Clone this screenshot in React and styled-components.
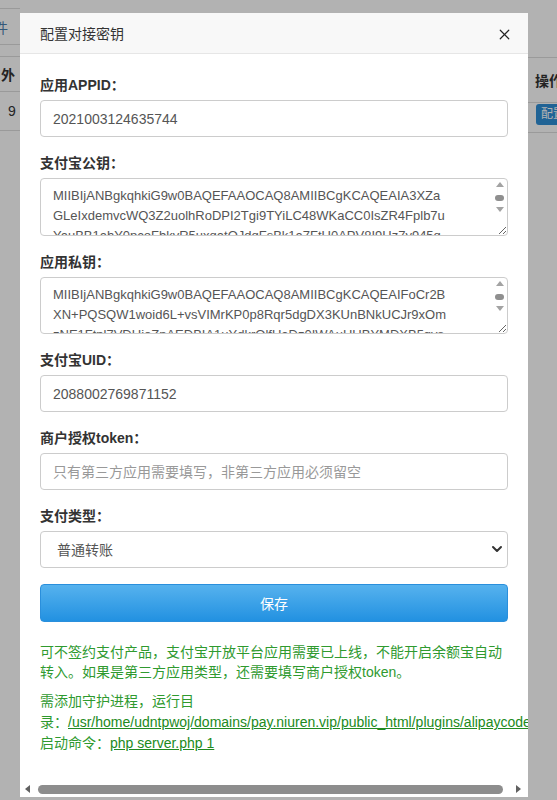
import React from 'react';
import styled, { createGlobalStyle } from 'styled-components';
import { X, ChevronDown } from 'lucide-react';

const GlobalStyle = createGlobalStyle`
  html, body {
    margin: 0;
    padding: 0;
  }
  body {
    font-family: "Liberation Sans", "Noto Sans CJK SC", sans-serif;
    font-size: 14px;
    color: #333;
    background: #fff;
  }
  * {
    box-sizing: border-box;
  }
`;

const Page = styled.div`
  display: flex;
  justify-content: space-between;
  height: 800px;
  overflow: hidden;
`;

const LeftStrip = styled.div`
  width: 20px;
  overflow: hidden;
  display: flex;
  flex-direction: column;
  padding-top: 8px;
`;

const RightStrip = styled.div`
  width: 29px;
  overflow: hidden;
  display: flex;
  flex-direction: column;
  padding-top: 57px;
`;

const TabBox = styled.div`
  height: 37px;
  border-top: 1px solid #ddd;
  border-bottom: 1px solid #ddd;
  display: flex;
  align-items: center;
  color: #4b7fae;
  white-space: nowrap;
  span {
    margin-left: -20px;
  }
`;

const HeadCell = styled.div`
  height: ${({ h }) => h}px;
  margin-top: ${({ mt }) => mt || 0}px;
  border-top: 1px solid #ddd;
  border-bottom: 1px solid #ddd;
  display: flex;
  align-items: center;
  font-weight: bold;
  white-space: nowrap;
  padding-left: ${({ pl }) => pl}px;
`;

const RowCell = styled.div`
  height: ${({ h }) => h}px;
  border-bottom: 1px solid #ddd;
  display: flex;
  align-items: ${({ top }) => (top ? 'flex-start' : 'center')};
  padding-top: ${({ top }) => (top ? 1 : 0)}px;
  white-space: nowrap;
  padding-left: ${({ pl }) => pl}px;
`;

const TinyButton = styled.span`
  display: inline-block;
  background: #2e8ed6;
  color: #fff;
  font-size: 12px;
  line-height: 21px;
  padding: 0 5px;
  border-radius: 3px;
`;

const Overlay = styled.div`
  position: fixed;
  inset: 0;
  background: rgba(0, 0, 0, 0.3);
`;

const Modal = styled.div`
  position: fixed;
  top: 13px;
  left: 20px;
  width: 508px;
  height: 784px;
  background: #fff;
  overflow: hidden;
  display: flex;
  flex-direction: column;
`;

const Header = styled.div`
  flex: none;
  height: 41px;
  background: #f8f8f8;
  border-bottom: 1px solid #e6e6e6;
  display: flex;
  align-items: center;
  justify-content: space-between;
  padding: 0 15px 0 20px;
`;

const Title = styled.span`
  font-size: 14px;
  color: #333;
`;

const Close = styled.button`
  border: 0;
  background: none;
  padding: 0;
  display: flex;
  color: #222;
  margin-top: 3px;
`;

const Body = styled.div`
  flex: 1;
  min-height: 0;
  overflow: hidden;
  padding: 21px 20px 0;
`;

const HScroll = styled.div`
  flex: none;
  height: 12px;
  margin-bottom: 2px;
  display: flex;
  align-items: center;
  padding: 0 7px 0 5px;
`;

const Arrow = styled.span`
  width: 0;
  height: 0;
  border-top: 4px solid transparent;
  border-bottom: 4px solid transparent;
  ${({ dir, color }) =>
    dir === 'left'
      ? `border-right: 5px solid ${color};`
      : `border-left: 5px solid ${color};`}
`;

const VArrow = styled.span`
  width: 0;
  height: 0;
  border-left: 4px solid transparent;
  border-right: 4px solid transparent;
  ${({ dir, color }) =>
    dir === 'up'
      ? `border-bottom: 5px solid ${color};`
      : `border-top: 5px solid ${color};`}
`;

const Track = styled.div`
  flex: 1;
  height: 100%;
  display: flex;
  align-items: center;
  padding: 0 13px 0 8px;
`;

const Thumb = styled.div`
  width: 100%;
  height: 9px;
  border-radius: 5px;
  background: #8d8d8d;
`;

const Group = styled.div`
  margin-bottom: 16px;
`;

const Label = styled.label`
  display: block;
  font-weight: bold;
  line-height: 20px;
  margin-bottom: 5px;
  color: #333;
`;

const Input = styled.input`
  display: block;
  width: 100%;
  height: 37px;
  padding: 6px 12px;
  border: 1px solid #ccc;
  border-radius: 4px;
  font-family: inherit;
  font-size: 14px;
  color: #555;
  outline: none;
  &::placeholder {
    color: #999;
  }
`;

const AreaWrap = styled.div`
  position: relative;
`;

const TextArea = styled.textarea`
  display: block;
  width: 100%;
  height: 57.5px;
  padding: 7px 26px 0 12px;
  border: 1px solid #ccc;
  border-radius: 4px;
  font-family: inherit;
  font-size: 13px;
  line-height: 20px;
  color: #555;
  outline: none;
  resize: vertical;
  overflow: hidden;
`;

const VScroll = styled.div`
  position: absolute;
  top: 1px;
  right: 1px;
  width: 15px;
  bottom: 15px;
  display: flex;
  flex-direction: column;
  align-items: center;
  padding-top: 3px;
  pointer-events: none;
`;

const Ball = styled.span`
  width: 9px;
  height: 6px;
  border-radius: 3px;
  background: #8f8f8f;
  margin: 8px 0 6px;
`;

const SelectWrap = styled.div`
  position: relative;
  svg {
    position: absolute;
    right: 3px;
    top: 10px;
    pointer-events: none;
    color: #333;
  }
`;

const Select = styled.select`
  display: block;
  width: 100%;
  height: 37px;
  padding: 0 30px 0 16px;
  border: 1px solid #ccc;
  border-radius: 4px;
  background: #fff;
  font-family: inherit;
  font-size: 14px;
  color: #555;
  appearance: none;
  outline: none;
`;

const SaveButton = styled.button`
  display: block;
  width: 100%;
  height: 38px;
  border: 1px solid #2a8fdc;
  border-radius: 4px;
  background: linear-gradient(to bottom, #56b2ee, #2291e1);
  color: #fff;
  font-family: inherit;
  font-size: 14px;
`;

const Note = styled.p`
  margin: ${({ first }) => (first ? '20px 0 9px' : '0')};
  line-height: ${({ lh }) => lh}px;
  color: #2f9a2f;
  font-size: 14px;
  a {
    color: #218a21;
    text-decoration: underline;
  }
`;

const publicKey = [
  'MIIBIjANBgkqhkiG9w0BAQEFAAOCAQ8AMIIBCgKCAQEAIA3XZa',
  'GLeIxdemvcWQ3Z2uolhRoDPI2Tgi9TYiLC48WKaCC0IsZR4Fplb7u',
  'YauBB1ahY0pcoFbkvR5uxqatQJdqFsBk1a7FtU0APV8I9Hz7y945q',
  'Lk2Dq8Wm0HcT5vNfJ3pX6eRbU1gS9yZ4aK7oQiVnB2MlCt8hE0rW',
  'd3sFx5PjN7uYqA1kG6zTbH9mLc2VwR4eO8iS0nJfK3tXpZ7aQ5yD',
  'gB1vM6hU9cE2rW8sL4oN0kT3jF7xIqAwIDAQAB',
].join('\n');

const privateKey = [
  'MIIBIjANBgkqhkiG9w0BAQEFAAOCAQ8AMIIBCgKCAQEAIFoCr2B',
  'XN+PQSQW1woid6L+vsVIMrKP0p8Rqr5dgDX3KUnBNkUCJr9xOm',
  'zNE1Ftnl7VDUjoZnAEDBIA1uYdkrOlfUaDz0IWAuHUBYMDXB5gys',
  'Qh3Lk8Vn2Pc6Tm0Rx9Wb4Jf1Ys7Ud5Ga3Ze8Ko2Ni6Hq0Ml4Ej9C',
  'tB5rX1wF7sD3pV9yA2uG6oK0zN4iT8mQ1cL5hJ3eW7bR9xS2fP6d',
  'Y0aU4kE8gM2nH6vO1qI5jZ9lC3tB7wX0sF4rD8pV2yA6uG1oK5z',
  'N9iT3mQ7cL0hJ4eW8bR2xS6fP1dY5aU9kE3gM7nH0vO4qI8jZ2l',
  'C6tB0wX4sF8rD2pV6yA0uG4oK8zN2iT6mQ0cL4hJ8eW2bR6xS0f',
].join('\n');

const KeyArea = ({ value }) => (
  <AreaWrap>
    <TextArea defaultValue={value} />
    <VScroll>
      <VArrow dir="up" color="#a3a3a3" />
      <Ball />
      <VArrow dir="down" color="#a3a3a3" />
    </VScroll>
  </AreaWrap>
);

const App = () => {
  return (
    <>
      <GlobalStyle />
      <Page>
        <LeftStrip>
          <TabBox>
            <span>文件</span>
          </TabBox>
          <HeadCell h={36} mt={11} pl={0}>
            <span style={{ marginLeft: 1 }}>外</span>
          </HeadCell>
          <RowCell h={39} pl={8}>9</RowCell>
        </LeftStrip>
        <RightStrip>
          <HeadCell h={46} pl={7}>
            操作
          </HeadCell>
          <RowCell h={30} pl={8} top>
            <TinyButton>配置</TinyButton>
          </RowCell>
        </RightStrip>
      </Page>

      <Overlay />

      <Modal>
        <Header>
          <Title>配置对接密钥</Title>
          <Close>
            <X size={17} strokeWidth={1.7} />
          </Close>
        </Header>
        <Body>
          <Group>
            <Label>应用APPID：</Label>
            <Input defaultValue="2021003124635744" />
          </Group>
          <Group>
            <Label>支付宝公钥：</Label>
            <KeyArea value={publicKey} />
          </Group>
          <Group>
            <Label>应用私钥：</Label>
            <KeyArea value={privateKey} />
          </Group>
          <Group>
            <Label>支付宝UID：</Label>
            <Input defaultValue="2088002769871152" />
          </Group>
          <Group>
            <Label>商户授权token：</Label>
            <Input placeholder="只有第三方应用需要填写，非第三方应用必须留空" />
          </Group>
          <Group>
            <Label>支付类型：</Label>
            <SelectWrap>
              <Select defaultValue="1">
                <option value="1">普通转账</option>
                <option value="2">安全发</option>
              </Select>
              <ChevronDown size={16} strokeWidth={3} />
            </SelectWrap>
          </Group>
          <SaveButton>保存</SaveButton>
          <Note first lh={20}>
            可不签约支付产品，支付宝开放平台应用需要已上线，不能开启余额宝自动转入。如果是第三方应用类型，还需要填写商户授权token。
          </Note>
          <Note lh={21}>
            需添加守护进程，运行目录：
            <a href="#">/usr/home/udntpwoj/domains/pay.niuren.vip/public_html/plugins/alipaycode/</a>
            <br />
            启动命令：<a href="#">php server.php 1</a>
          </Note>
        </Body>
        <HScroll>
          <Arrow dir="left" color="#606060" />
          <Track>
            <Thumb />
          </Track>
          <Arrow dir="right" color="#606060" />
        </HScroll>
      </Modal>
    </>
  );
};

export default App;
